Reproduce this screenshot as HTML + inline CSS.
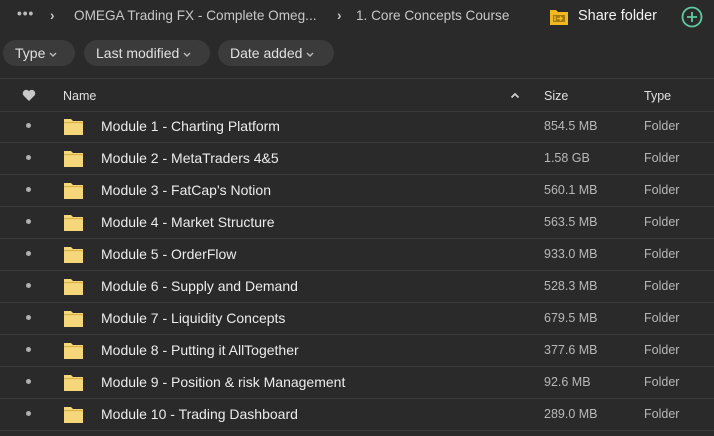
<!DOCTYPE html>
<html><head><style>
*{margin:0;padding:0;box-sizing:border-box}
body{width:714px;height:436px;background:#2a2a2a;font-family:"Liberation Sans",sans-serif;color:#e6e6e6;position:relative;overflow:hidden}
.a{position:absolute;white-space:nowrap}
.bc{font-size:13.6px;color:#c8c8c8;top:8px}
.chip{position:absolute;top:40px;height:26px;border-radius:13px;background:#3b3b3b;color:#e0e0e0;font-size:14px;line-height:26px;padding-left:12px}
.chip svg{margin-left:4px;vertical-align:1px}
.line{position:absolute;left:0;width:714px;height:1px;background:#3a3a3a}
.row{position:absolute;left:0;width:714px;height:32px}
.row .dot{position:absolute;left:26px;top:13px;width:5px;height:5px;border-radius:50%;background:#b0b0b0}
.row .n{position:absolute;left:101px;top:8px;font-size:14px;color:#ececec}
.row .s{position:absolute;left:544px;top:9px;font-size:12.5px;color:#b8b8b8}
.row .t{position:absolute;left:644px;top:9px;font-size:12.5px;color:#b8b8b8}
.fold{position:absolute;left:64px;top:8px}
</style></head><body>
<div class="a bc" style="left:17px;top:6px;font-weight:bold;letter-spacing:1px;color:#bbb">•••</div>
<div class="a bc" style="left:50px;font-weight:bold">›</div>
<div class="a bc" style="left:74px">OMEGA Trading FX - Complete Omeg...</div>
<div class="a bc" style="left:337px;font-weight:bold">›</div>
<div class="a bc" style="left:356px">1. Core Concepts Course</div>
<svg class="a" style="left:549px;top:8px" width="20" height="18" viewBox="0 0 20 18"><path d="M1 2h6l2 2h10v13H1z" fill="#f2b81f"/><rect x="4" y="7" width="12" height="7" fill="#6b4f0a" opacity=".6"/><path d="M6 8v5M8 10.5h5M11 8.5l2 2-2 2" stroke="#f2b81f" stroke-width="1.4" fill="none"/></svg>
<div class="a" style="left:578px;top:8px;font-size:14.5px;color:#f2f2f2">Share folder</div>
<svg class="a" style="left:681px;top:6px" width="22" height="22" viewBox="0 0 22 22"><circle cx="11" cy="11" r="9.5" fill="none" stroke="#5fcaa0" stroke-width="1.8"/><path d="M11 6v10M6 11h10" stroke="#5fcaa0" stroke-width="1.8"/></svg>
<div class="chip" style="left:3px;width:72px">Type<svg width="8" height="5" viewBox="0 0 8 5"><path d="M1 1l3 3 3-3" stroke="#bbb" stroke-width="1.4" fill="none"/></svg></div>
<div class="chip" style="left:84px;width:126px">Last modified<svg width="8" height="5" viewBox="0 0 8 5"><path d="M1 1l3 3 3-3" stroke="#bbb" stroke-width="1.4" fill="none"/></svg></div>
<div class="chip" style="left:218px;width:116px">Date added<svg width="8" height="5" viewBox="0 0 8 5"><path d="M1 1l3 3 3-3" stroke="#bbb" stroke-width="1.4" fill="none"/></svg></div>
<div class="line" style="top:78px"></div>
<svg class="a" style="left:22px;top:89px" width="14" height="13" viewBox="0 0 14 13"><path d="M7 12L1.5 6.5A3.2 3.2 0 0 1 7 2.2 3.2 3.2 0 0 1 12.5 6.5z" fill="#c8c8c8"/></svg>
<div class="a" style="left:63px;top:89px;font-size:12.5px;color:#e0e0e0">Name</div>
<svg class="a" style="left:510px;top:92px" width="10" height="7" viewBox="0 0 10 7"><path d="M1.5 5.5L5 2l3.5 3.5" stroke="#ccc" stroke-width="1.8" fill="none"/></svg>
<div class="a" style="left:544px;top:89px;font-size:12.5px;color:#e0e0e0">Size</div>
<div class="a" style="left:644px;top:89px;font-size:12.5px;color:#e0e0e0">Type</div>
<div class="line" style="top:111px"></div>
<div class="row" style="top:110px"><i class="dot"></i><svg class="fold" width="19" height="17" viewBox="0 0 19 17"><path d="M0 1h7l2 2h10v14H0z" fill="#f5d77a"/><rect x="0" y="4" width="19" height="1.2" fill="#d9b24a"/></svg><span class="n">Module 1 - Charting Platform</span><span class="s">854.5 MB</span><span class="t">Folder</span></div>
<div class="line" style="top:142px"></div>
<div class="row" style="top:142px"><i class="dot"></i><svg class="fold" width="19" height="17" viewBox="0 0 19 17"><path d="M0 1h7l2 2h10v14H0z" fill="#f5d77a"/><rect x="0" y="4" width="19" height="1.2" fill="#d9b24a"/></svg><span class="n">Module 2 - MetaTraders 4&amp;5</span><span class="s">1.58 GB</span><span class="t">Folder</span></div>
<div class="line" style="top:174px"></div>
<div class="row" style="top:174px"><i class="dot"></i><svg class="fold" width="19" height="17" viewBox="0 0 19 17"><path d="M0 1h7l2 2h10v14H0z" fill="#f5d77a"/><rect x="0" y="4" width="19" height="1.2" fill="#d9b24a"/></svg><span class="n">Module 3 - FatCap's Notion</span><span class="s">560.1 MB</span><span class="t">Folder</span></div>
<div class="line" style="top:206px"></div>
<div class="row" style="top:206px"><i class="dot"></i><svg class="fold" width="19" height="17" viewBox="0 0 19 17"><path d="M0 1h7l2 2h10v14H0z" fill="#f5d77a"/><rect x="0" y="4" width="19" height="1.2" fill="#d9b24a"/></svg><span class="n">Module 4 - Market Structure</span><span class="s">563.5 MB</span><span class="t">Folder</span></div>
<div class="line" style="top:238px"></div>
<div class="row" style="top:238px"><i class="dot"></i><svg class="fold" width="19" height="17" viewBox="0 0 19 17"><path d="M0 1h7l2 2h10v14H0z" fill="#f5d77a"/><rect x="0" y="4" width="19" height="1.2" fill="#d9b24a"/></svg><span class="n">Module 5 - OrderFlow</span><span class="s">933.0 MB</span><span class="t">Folder</span></div>
<div class="line" style="top:270px"></div>
<div class="row" style="top:270px"><i class="dot"></i><svg class="fold" width="19" height="17" viewBox="0 0 19 17"><path d="M0 1h7l2 2h10v14H0z" fill="#f5d77a"/><rect x="0" y="4" width="19" height="1.2" fill="#d9b24a"/></svg><span class="n">Module 6 - Supply and Demand</span><span class="s">528.3 MB</span><span class="t">Folder</span></div>
<div class="line" style="top:302px"></div>
<div class="row" style="top:302px"><i class="dot"></i><svg class="fold" width="19" height="17" viewBox="0 0 19 17"><path d="M0 1h7l2 2h10v14H0z" fill="#f5d77a"/><rect x="0" y="4" width="19" height="1.2" fill="#d9b24a"/></svg><span class="n">Module 7 - Liquidity Concepts</span><span class="s">679.5 MB</span><span class="t">Folder</span></div>
<div class="line" style="top:334px"></div>
<div class="row" style="top:334px"><i class="dot"></i><svg class="fold" width="19" height="17" viewBox="0 0 19 17"><path d="M0 1h7l2 2h10v14H0z" fill="#f5d77a"/><rect x="0" y="4" width="19" height="1.2" fill="#d9b24a"/></svg><span class="n">Module 8 - Putting it AllTogether</span><span class="s">377.6 MB</span><span class="t">Folder</span></div>
<div class="line" style="top:366px"></div>
<div class="row" style="top:366px"><i class="dot"></i><svg class="fold" width="19" height="17" viewBox="0 0 19 17"><path d="M0 1h7l2 2h10v14H0z" fill="#f5d77a"/><rect x="0" y="4" width="19" height="1.2" fill="#d9b24a"/></svg><span class="n">Module 9 - Position &amp; risk Management</span><span class="s">92.6 MB</span><span class="t">Folder</span></div>
<div class="line" style="top:398px"></div>
<div class="row" style="top:398px"><i class="dot"></i><svg class="fold" width="19" height="17" viewBox="0 0 19 17"><path d="M0 1h7l2 2h10v14H0z" fill="#f5d77a"/><rect x="0" y="4" width="19" height="1.2" fill="#d9b24a"/></svg><span class="n">Module 10 - Trading Dashboard</span><span class="s">289.0 MB</span><span class="t">Folder</span></div>
<div class="line" style="top:430px"></div>
</body></html>
